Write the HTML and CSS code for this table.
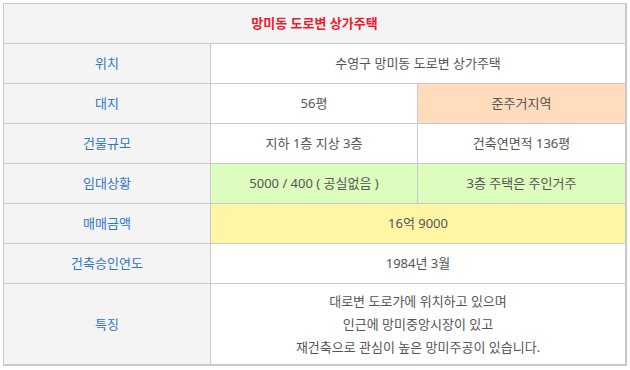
FILE: index.html
```html
<!DOCTYPE html>
<html lang="ko">
<head>
<meta charset="utf-8">
<link rel="stylesheet" href="styles.css">
</head>
<body>
<div class="sheet">
  <div class="cell title span3">망미동 도로변 상가주택</div>

  <div class="cell label">위치</div>
  <div class="cell value span2">수영구 망미동 도로변 상가주택</div>

  <div class="cell label">대지</div>
  <div class="cell value">56평</div>
  <div class="cell value orange">준주거지역</div>

  <div class="cell label">건물규모</div>
  <div class="cell value">지하 1층 지상 3층</div>
  <div class="cell value">건축연면적 136평</div>

  <div class="cell label">임대상황</div>
  <div class="cell value green">5000 / 400 ( 공실없음 )</div>
  <div class="cell value green">3층 주택은 주인거주</div>

  <div class="cell label">매매금액</div>
  <div class="cell value yellow span2">16억 9000</div>

  <div class="cell label">건축승인연도</div>
  <div class="cell value span2">1984년 3월</div>

  <div class="cell label">특징</div>
  <div class="cell value span2 multi">
    <p>대로변 도로가에 위치하고 있으며</p>
    <p>인근에 망미중앙시장이 있고</p>
    <p>재건축으로 관심이 높은 망미주공이 있습니다.</p>
  </div>
</div>
</body>
</html>
```

FILE: styles.css
```css
html, body {
  margin: 0;
  padding: 0;
  background: #ffffff;
}
body {
  padding: 3px;
  font-family: "Noto Sans", "Noto Sans CJK KR", sans-serif;
  font-size: 13px;
  color: #555555;
}
.sheet {
  display: grid;
  grid-template-columns: 207px 207px 208px;
  grid-template-rows: repeat(7, 40px) 81px;
  width: 622px;
  border-top: 1px solid #c8c8c8;
  border-left: 1px solid #c8c8c8;
  border-right: 1px solid #c8c8c8;
  border-bottom: 1px solid #c8c8c8;
}
.cell {
  box-sizing: border-box;
  border-right: 1px solid #c8c8c8;
  border-bottom: 1px solid #c8c8c8;
  display: flex;
  align-items: center;
  justify-content: center;
  text-align: center;
  background: #ffffff;
  line-height: 1;
}
.span3 { grid-column: span 3; }
.span2 { grid-column: span 2; }
.title {
  background: #f4f4f4;
  color: #f21a2a;
  font-weight: bold;
}
.label {
  background: #f4f4f4;
  color: #2f76c9;
}
.orange { background: #fedcbc; }
.green { background: #dcfdbd; }
.yellow { background: #fff6a5; }
.multi {
  flex-direction: column;
}
.multi p {
  margin: 0;
  line-height: 23px;
}
```
